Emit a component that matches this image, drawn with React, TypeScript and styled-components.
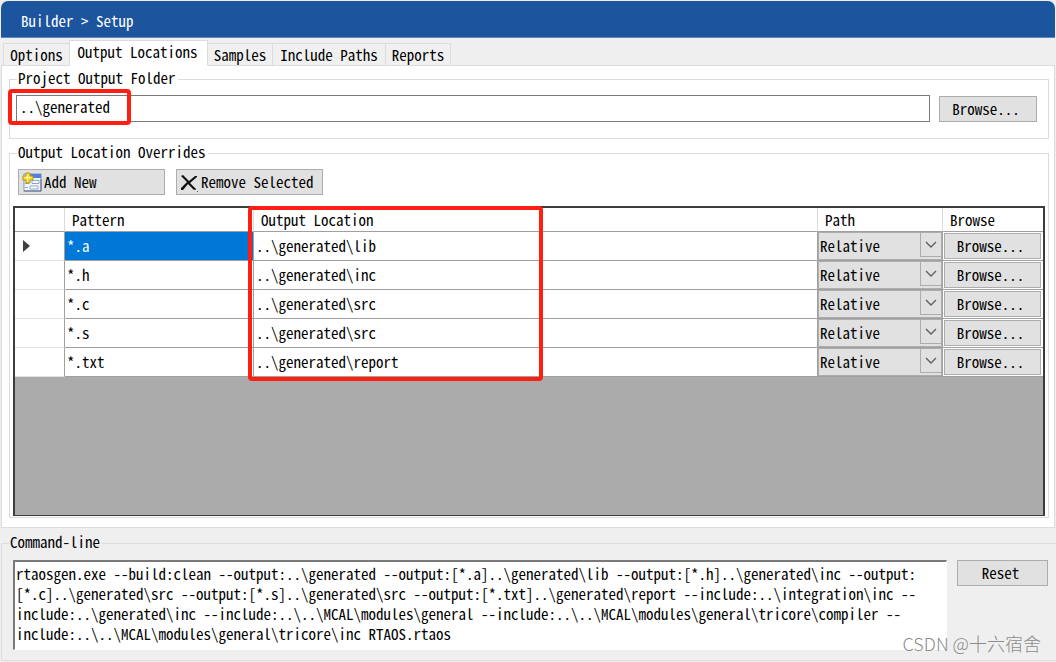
import React from "react";
import styled, { createGlobalStyle } from "styled-components";

const mono = `"Noto Sans CJK SC", "Liberation Mono", monospace`;

const GlobalStyle = createGlobalStyle`
  *, *::before, *::after { box-sizing: border-box; }
  html, body { margin: 0; background: #efefef; }
  body, button, input, select, textarea {
    font-family: ${mono};
    font-feature-settings: "hwid";
    font-size: 15px;
    line-height: 20px;
    color: #000;
  }
`;

const Page = styled.div`
  position: relative;
  display: flex;
  flex-direction: column;
  min-height: 100vh;
  padding: 1px;
`;

const Header = styled.header`
  padding: 10px 20px 6px;
  border-radius: 7px 7px 0 0;
  background: #1d549e;
  border-bottom: 1px solid #5f87ba;
  color: #fff;
`;

const TabBar = styled.div`
  display: flex;
  align-items: flex-end;
  height: 28px;
  margin: 0 2px -1px;
  position: relative;
`;

const Tab = styled.button<{ $active?: boolean; $width: number }>`
  width: ${(p) => p.$width}px;
  height: ${(p) => (p.$active ? 26 : 23)}px;
  padding: ${(p) => (p.$active ? "0 2px 2px 0" : "0")};
  border: 1px solid #dcdcdc;
  border-left-width: ${(p) => (p.$active ? 1 : 0)}px;
  border-bottom-color: ${(p) => (p.$active ? "#fff" : "#dcdcdc")};
  background: ${(p) => (p.$active ? "#fff" : "#f0f0f0")};
  white-space: nowrap;
  &:first-child { border-left-width: 1px; border-right-width: 0; }
`;

const Panel = styled.main`
  flex: 1;
  display: flex;
  flex-direction: column;
  gap: 4px;
  padding: 3px 5px 9px 7px;
  border: 1px solid #dcdcdc;
  background: #fff;
`;

const Group = styled.fieldset`
  min-width: 0;
  margin: 0;
  padding: 0;
  border: 1px solid #dcdcdc;
`;

const Legend = styled.legend`
  margin-left: 7px;
  padding: 0 2px 0 1px;
  height: 20px;
  line-height: 18px;
`;

const StretchGroup = styled.section`
  flex: 1;
  display: flex;
  flex-direction: column;
  margin-top: 10px;
  border: 1px solid #dcdcdc;
`;

const StretchLegend = styled.h2`
  align-self: flex-start;
  height: 20px;
  margin: -11px 0 0 7px;
  padding: 0 2px 0 1px;
  background: #fff;
  font-size: 15px;
  font-weight: 400;
  line-height: 18px;
`;

const FolderRow = styled.div`
  display: flex;
  align-items: flex-end;
  gap: 9px;
  padding: 6px 11px 16px 6px;
`;

const FolderField = styled.div`
  position: relative;
  flex: 1;
  display: flex;
`;

const TextInput = styled.input`
  width: 100%;
  height: 27px;
  padding: 0 3px 4px;
  border: 1px solid #7a7a7a;
  border-radius: 0;
  background: #fff;
`;

const Highlight = styled.div<{ $x: number; $y: number; $w: number; $h: number }>`
  position: absolute;
  left: ${(p) => p.$x}px;
  top: ${(p) => p.$y}px;
  width: ${(p) => p.$w}px;
  height: ${(p) => p.$h}px;
  border: 4px solid #ff1f12;
  border-radius: 4px;
  pointer-events: none;
`;

const PushButton = styled.button<{ $width: number; $left?: boolean }>`
  display: flex;
  align-items: center;
  justify-content: ${(p) => (p.$left ? "flex-start" : "center")};
  gap: 2px;
  flex: none;
  width: ${(p) => p.$width}px;
  height: 26px;
  padding: ${(p) => (p.$left ? "0 3px" : "0 4px 0 0")};
  border: 1px solid #adadad;
  background: #e1e1e1;
  white-space: nowrap;
`;

const Toolbar = styled.div`
  display: flex;
  gap: 11px;
  padding: 6px 8px 11px;
`;

const GridFrame = styled.div`
  position: relative;
  flex: 1;
  min-height: 240px;
  margin: 0 3px 1px;
  border: 1px solid #3c3c3c;
  border-width: 2px 2px 1px;
  background: #ababab;
`;

const Grid = styled.table`
  width: 100%;
  table-layout: fixed;
  border-collapse: separate;
  border-spacing: 0;
  background: #fff;
`;

const HeadCell = styled.th`
  height: 24px;
  padding: 0 7px;
  border-right: 1px solid #dcdcdc;
  border-bottom: 1px solid #a0a0a0;
  font-weight: 400;
  text-align: left;
  &:last-child { border-right: 0; }
`;

const Cell = styled.td<{ $selected?: boolean; $flush?: boolean }>`
  height: 29px;
  padding: ${(p) => (p.$flush ? "0" : "0 2px")};
  border-right: 1px solid #a0a0a0;
  border-bottom: 1px solid #a0a0a0;
  background: ${(p) => (p.$selected ? "#0078d7" : "#fff")};
  color: ${(p) => (p.$selected ? "#fff" : "#000")};
  &:last-child { border-right: 0; }
`;

const RowHead = styled(Cell)`
  padding: 0 8px;
  border-bottom-color: #e3e3e3;
`;

const SelectBox = styled.div`
  position: relative;
  display: flex;
  height: 28px;
  border: 1px solid #adadad;
`;

const PathSelect = styled.select`
  appearance: none;
  width: 100%;
  padding: 0 24px 0 1px;
  border: 0;
  border-radius: 0;
  background: #e1e1e1;
`;

const Arrow = styled.span`
  position: absolute;
  top: 0;
  right: 0;
  display: flex;
  align-items: center;
  justify-content: center;
  width: 21px;
  height: 24px;
  border: 1px solid #adadad;
  border-width: 0 0 1px 1px;
  pointer-events: none;
`;

const CellButton = styled.button`
  display: block;
  width: calc(100% - 3px);
  height: 26px;
  margin-left: 1px;
  padding: 0 4px 0 0;
  border: 1px solid #adadad;
  background: #e1e1e1;
`;

const CommandGroup = styled(Group)`
  margin: 5px -2px 0 0;
`;

const CommandRow = styled.div`
  display: flex;
  align-items: flex-start;
  gap: 10px;
  padding: 7px 8px 10px 11px;
`;

const CommandText = styled.textarea`
  flex: 1;
  min-width: 0;
  height: 90px;
  padding: 2px 1px;
  border: 1px solid #fff;
  border-top: 2px solid #7a7a7a;
  border-left: 2px solid #7a7a7a;
  border-radius: 0;
  background: #fff;
  white-space: pre;
  overflow: hidden;
  resize: none;
`;

const Watermark = styled.div`
  position: absolute;
  right: 15px;
  bottom: 6px;
  font: 300 18px/26px "Noto Sans CJK SC", sans-serif;
  font-feature-settings: normal;
  color: #8c8c8c;
`;

const NewIcon = () => (
  <svg width="20" height="20" viewBox="0 0 20 20" aria-hidden="true">
    <rect x="2" y="2" width="17" height="17" fill="#f3f7fc" stroke="#8b98ad" />
    <path d="M8 2h11v4H8z" fill="#4b82dd" />
    <path d="M2 19h17V7" fill="none" stroke="#596b86" />
    <path d="M10 8.500h7v3h-7zM8 14h8v3H8z" fill="#fff" stroke="#89a9cf" />
    <path d="M3 11.500h4M3 15.500h3" stroke="#89a9cf" />
    <path d="M4 1h4v3h3v4H8v3H4V8H1V4h3z" fill="#f6dc3c" stroke="#b99517" />
    <path d="M5.500 2.500v6M2.500 5.500h6" stroke="#fff7a8" />
  </svg>
);

const RemoveIcon = () => (
  <svg width="19" height="20" viewBox="0 0 19 20" aria-hidden="true">
    <path d="M1 4l2-1 6 6 6-5 2 0 0 1-7 6 6 6-2 1-6-6-5 6-2 0 0-2 6-6z" fill="#111" />
    <path d="M15 17h1v1h-1zM17 19h1v1h-1z" fill="#555" />
  </svg>
);

const Chevron = () => (
  <svg width="12" height="8" viewBox="0 0 12 8" aria-hidden="true">
    <path d="M1 1l5 5 5-5" fill="none" stroke="#606060" strokeWidth="1.400" />
  </svg>
);

const RowMarker = styled.svg`
  display: block;
`;

const CurrentRow = () => (
  <RowMarker width="7" height="12" viewBox="0 0 7 12" aria-hidden="true">
    <path d="M0 0l7 6-7 6z" fill="#404040" />
  </RowMarker>
);

const Column = styled.col<{ $width?: number }>`
  width: ${(p) => (p.$width ? `${p.$width}px` : "auto")};
`;

const tabs = [
  { label: "Options", width: 66 },
  { label: "Output Locations", width: 139, active: true },
  { label: "Samples", width: 65 },
  { label: "Include Paths", width: 113 },
  { label: "Reports", width: 65 },
];

const rows = [
  { pattern: "*.a", location: "..\\generated\\lib" },
  { pattern: "*.h", location: "..\\generated\\inc" },
  { pattern: "*.c", location: "..\\generated\\src" },
  { pattern: "*.s", location: "..\\generated\\src" },
  { pattern: "*.txt", location: "..\\generated\\report" },
];

const command = [
  "rtaosgen.exe --build:clean --output:..\\generated --output:[*.a]..\\generated\\lib --output:[*.h]..\\generated\\inc --output:",
  "[*.c]..\\generated\\src --output:[*.s]..\\generated\\src --output:[*.txt]..\\generated\\report --include:..\\integration\\inc --",
  "include:..\\generated\\inc --include:..\\..\\MCAL\\modules\\general --include:..\\..\\MCAL\\modules\\general\\tricore\\compiler --",
  "include:..\\..\\MCAL\\modules\\general\\tricore\\inc RTAOS.rtaos",
].join("\n");

export default function App() {
  return (
    <Page>
      <GlobalStyle />
      <Header>Builder &gt; Setup</Header>
      <TabBar role="tablist">
        {tabs.map((t) => (
          <Tab key={t.label} role="tab" aria-selected={!!t.active} $active={t.active} $width={t.width}>
            {t.label}
          </Tab>
        ))}
      </TabBar>
      <Panel>
        <Group>
          <Legend id="folder-label">Project Output Folder</Legend>
          <FolderRow>
            <FolderField>
              <TextInput aria-labelledby="folder-label" defaultValue={"..\\generated"} />
              <Highlight $x={-8} $y={-6} $w={123} $h={36} />
            </FolderField>
            <PushButton $width={98}>Browse...</PushButton>
          </FolderRow>
        </Group>
        <StretchGroup aria-labelledby="overrides-label">
          <StretchLegend id="overrides-label">Output Location Overrides</StretchLegend>
          <Toolbar>
            <PushButton $width={147} $left><NewIcon />Add New</PushButton>
            <PushButton $width={147} $left><RemoveIcon />Remove Selected</PushButton>
          </Toolbar>
          <GridFrame>
            <Grid>
              <colgroup>
                <Column $width={50} />
                <Column $width={189} />
                <Column />
                <Column $width={125} />
                <Column $width={100} />
              </colgroup>
              <thead>
                <tr>
                  <HeadCell aria-label="Current row" />
                  <HeadCell>Pattern</HeadCell>
                  <HeadCell>Output Location</HeadCell>
                  <HeadCell>Path</HeadCell>
                  <HeadCell>Browse</HeadCell>
                </tr>
              </thead>
              <tbody>
                {rows.map((r, i) => (
                  <tr key={r.pattern}>
                    <RowHead>{i === 0 && <CurrentRow />}</RowHead>
                    <Cell $selected={i === 0}>{r.pattern}</Cell>
                    <Cell>{r.location}</Cell>
                    <Cell $flush>
                      <SelectBox>
                        <PathSelect aria-label={`Path for ${r.pattern}`} defaultValue="Relative">
                          <option>Relative</option>
                        </PathSelect>
                        <Arrow><Chevron /></Arrow>
                      </SelectBox>
                    </Cell>
                    <Cell $flush><CellButton>Browse...</CellButton></Cell>
                  </tr>
                ))}
              </tbody>
            </Grid>
            <Highlight $x={233} $y={-2} $w={295} $h={175} />
          </GridFrame>
        </StretchGroup>
      </Panel>
      <CommandGroup>
        <Legend id="command-label">Command-line</Legend>
        <CommandRow>
          <CommandText aria-labelledby="command-label" readOnly value={command} />
          <PushButton $width={91}>Reset</PushButton>
        </CommandRow>
      </CommandGroup>
      <Watermark>CSDN @十六宿舍</Watermark>
    </Page>
  );
}
